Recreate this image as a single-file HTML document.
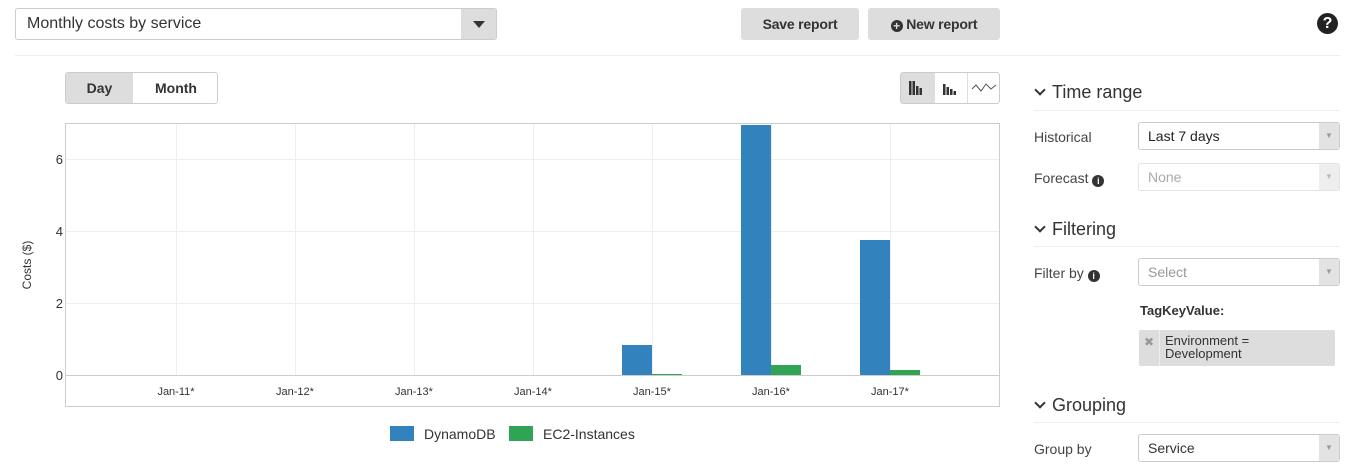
<!DOCTYPE html>
<html><head><style>
*{box-sizing:border-box;margin:0;padding:0}
body{width:1350px;height:467px;background:#fff;font-family:"Liberation Sans",Arial,sans-serif;color:#333;position:relative;overflow:hidden}
.a{position:absolute}
.btn{position:absolute;background:#ddd;border-radius:3px;font-weight:bold;font-size:14px;color:#333;text-align:center;line-height:33px;letter-spacing:-0.2px}
.lbl{position:absolute;font-size:14px;color:#444}
.sel{position:absolute;border:1px solid #ccc;border-radius:3px;height:28px;width:202px;font-size:14px;line-height:26px;padding-left:9px;background:#fff}
.sel .ar{position:absolute;right:0;top:0;width:20px;height:26px;background:#e3e3e3;color:#999;font-size:8px;text-align:center}
.h{position:absolute;font-size:18px;color:#333}
.hr{position:absolute;height:1px;background:#eee}
.chev{display:inline-block;width:8px;height:8px;border-right:2.5px solid #333;border-bottom:2.5px solid #333;transform:rotate(45deg);margin:0 8px 4px 2px}
.ic{display:inline-block;width:12px;height:12px;border-radius:50%;background:#333;color:#fff;font-size:9px;text-align:center;line-height:12px;font-weight:bold;vertical-align:-1px}
</style></head><body>
<div class="a" style="left:15px;top:8px;width:482px;height:32px;border:1px solid #ccc;border-radius:3px;font-size:16px;line-height:30px;padding-left:11px">Monthly costs by service
<div class="a" style="right:0;top:0;width:35px;height:30px;background:#ddd"><div class="a" style="left:12px;top:12px;border-left:6px solid transparent;border-right:6px solid transparent;border-top:7px solid #333"></div></div></div>
<div class="btn" style="left:741px;top:8px;width:118px;height:32px">Save report</div>
<div class="btn" style="left:868px;top:8px;width:132px;height:32px"><span style="display:inline-block;width:12px;height:12px;border-radius:50%;background:#333;color:#ddd;font-size:12px;line-height:12px;vertical-align:-1px">+</span> New report</div>
<div class="a" style="left:1317px;top:13px;width:21px;height:21px;border-radius:50%;background:#222;color:#fff;font-weight:bold;font-size:16px;text-align:center;line-height:21px">?</div>
<div class="hr" style="left:15px;top:55px;width:1325px"></div>

<div class="a" style="left:65px;top:72px;width:153px;height:32px;border:1px solid #ccc;border-radius:3px;overflow:hidden;font-weight:bold;font-size:14px;line-height:30px">
<div class="a" style="left:0;top:0;width:67px;height:30px;background:#ddd;text-align:center">Day</div>
<div class="a" style="left:67px;top:0;width:86px;height:30px;text-align:center">Month</div></div>
<div class="a" style="left:900px;top:72px;width:100px;height:32px;border:1px solid #ccc;border-radius:3px;overflow:hidden">
<div class="a" style="left:0;top:0;width:34px;height:30px;background:#ddd"></div>
<div class="a" style="left:66px;top:0;width:1px;height:30px;background:#ddd"></div>
<svg class="a" style="left:0;top:0" width="100" height="30"><g fill="#333"><rect x="8" y="8" width="2.5" height="14"/><rect x="11.5" y="8" width="2.5" height="14"/><rect x="15" y="13" width="2.5" height="9"/><rect x="18.5" y="15" width="2.5" height="7"/><rect x="42" y="11" width="2.5" height="11"/><rect x="45.5" y="14" width="2.5" height="8"/><rect x="49" y="16" width="2.5" height="6"/><rect x="52.5" y="18" width="2.5" height="4"/></g><polyline points="71,16 75,12 80,18 85,11 90,16 95,12" fill="none" stroke="#555" stroke-width="1"/></svg></div>

<svg class="a" style="left:0;top:0" width="1010" height="467">
<g stroke="#eee" stroke-width="1">
<line x1="66" y1="159.5" x2="999" y2="159.5"/><line x1="66" y1="231.5" x2="999" y2="231.5"/><line x1="66" y1="303.5" x2="999" y2="303.5"/>
<line x1="176.5" y1="124" x2="176.5" y2="375"/><line x1="295.5" y1="124" x2="295.5" y2="375"/><line x1="414.5" y1="124" x2="414.5" y2="375"/><line x1="533.5" y1="124" x2="533.5" y2="375"/><line x1="652.5" y1="124" x2="652.5" y2="375"/><line x1="771.5" y1="124" x2="771.5" y2="375"/><line x1="890.5" y1="124" x2="890.5" y2="375"/>
</g>
<rect x="65.5" y="123.5" width="934" height="283" fill="none" stroke="#ccc"/>
<line x1="66" y1="375.5" x2="999" y2="375.5" stroke="#ccc"/>
<g fill="#3182bd"><rect x="622" y="345" width="30" height="30"/><rect x="741" y="125" width="30" height="250"/><rect x="860" y="240" width="30" height="135"/></g>
<g fill="#31a354"><rect x="652" y="374" width="30" height="1"/><rect x="771" y="365" width="30" height="10"/><rect x="890" y="370" width="30" height="5"/></g>
<text x="31" y="265" transform="rotate(-90 31 265)" text-anchor="middle" font-size="12" fill="#333" font-family="Liberation Sans">Costs ($)</text>
<g font-size="13" fill="#333" text-anchor="end" font-family="Liberation Sans"><text x="63" y="164">6</text><text x="63" y="236">4</text><text x="63" y="308">2</text><text x="63" y="380">0</text></g>
<g font-size="11" fill="#333" text-anchor="middle" font-family="Liberation Sans"><text x="176" y="395">Jan-11*</text><text x="295" y="395">Jan-12*</text><text x="414" y="395">Jan-13*</text><text x="533" y="395">Jan-14*</text><text x="652" y="395">Jan-15*</text><text x="771" y="395">Jan-16*</text><text x="890" y="395">Jan-17*</text></g>
<rect x="390" y="426" width="24" height="15" fill="#3182bd"/><text x="424" y="439" font-size="14" fill="#333" font-family="Liberation Sans">DynamoDB</text>
<rect x="509" y="426" width="24" height="15" fill="#31a354"/><text x="543" y="439" font-size="14" fill="#333" font-family="Liberation Sans">EC2-Instances</text>
</svg>

<div class="h" style="left:1034px;top:82px"><span class="chev"></span>Time range</div>
<div class="hr" style="left:1034px;top:110px;width:306px"></div>
<div class="lbl" style="left:1034px;top:129px">Historical</div>
<div class="sel" style="left:1138px;top:122px;color:#222">Last 7 days<div class="ar">▼</div></div>
<div class="lbl" style="left:1034px;top:170px">Forecast <span class="ic">i</span></div>
<div class="sel" style="left:1138px;top:163px;color:#aaa;border-color:#e3e3e3">None<div class="ar" style="background:#eee;color:#bbb">▼</div></div>
<div class="h" style="left:1034px;top:219px"><span class="chev"></span>Filtering</div>
<div class="hr" style="left:1034px;top:246px;width:306px"></div>
<div class="lbl" style="left:1034px;top:265px">Filter by <span class="ic">i</span></div>
<div class="sel" style="left:1138px;top:258px;color:#999">Select<div class="ar">▼</div></div>
<div class="a" style="left:1140px;top:303px;font-size:13px;font-weight:bold;color:#333">TagKeyValue:</div>
<div class="a" style="left:1139px;top:330px;width:196px;height:36px;background:#ddd;border-radius:2px">
<div class="a" style="left:0;top:0;width:21px;height:36px;border-right:1px solid #eee;color:#999;font-size:12px;text-align:center;line-height:24px">✖</div>
<div class="a" style="left:26px;top:4px;font-size:13px;line-height:13px;color:#333">Environment =<br>Development</div></div>
<div class="h" style="left:1034px;top:395px"><span class="chev"></span>Grouping</div>
<div class="hr" style="left:1034px;top:422px;width:306px"></div>
<div class="lbl" style="left:1034px;top:441px">Group by</div>
<div class="sel" style="left:1138px;top:434px;color:#333">Service<div class="ar">▼</div></div>
</body></html>
